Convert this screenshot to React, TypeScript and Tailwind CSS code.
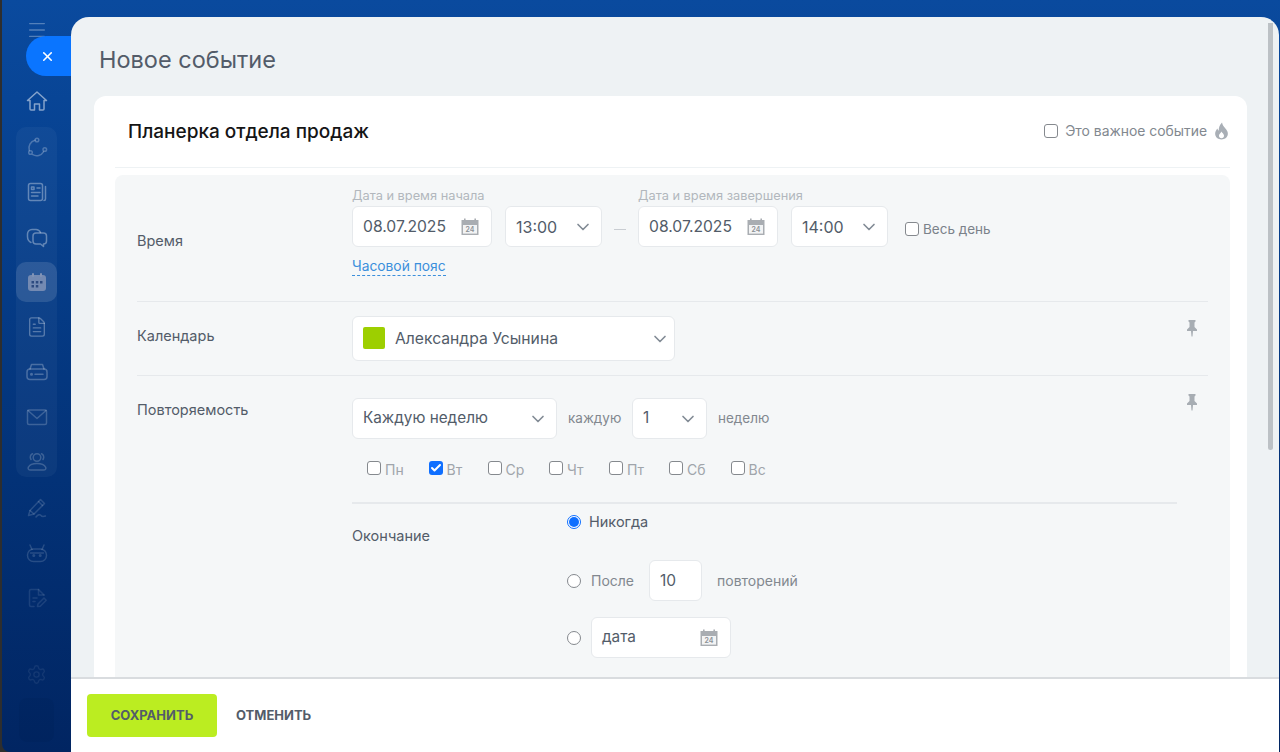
import { Check, ChevronDown, FileText, Menu, Settings, X } from 'lucide-react'

const font = { fontFamily: 'Inter, "Noto Sans", sans-serif' }

function CalIcon() {
  return (
    <svg width="20" height="20" viewBox="0 0 20 20" className="shrink-0">
      <rect x="1.5" y="3" width="17" height="15" fill="#a9adb2" />
      <rect x="4" y="1.5" width="1.6" height="3" fill="#a9adb2" />
      <rect x="14.4" y="1.5" width="1.6" height="3" fill="#a9adb2" />
      <rect x="3" y="8" width="14" height="8.6" fill="#f2f3f4" />
      <text x="10" y="15.2" textAnchor="middle" fontSize="7" fontWeight="600" fill="#8b9095" fontFamily="Inter, sans-serif">24</text>
    </svg>
  )
}

function Flame() {
  return (
    <svg width="15" height="18" viewBox="0 0 14 17">
      <path d="M7.5 0.5c.4 2.6 1.6 3.8 3.2 5.6 1.4 1.6 2.3 3 2.3 5 0 3.2-2.7 5.4-6 5.4s-6-2.2-6-5.4c0-2 .9-3.6 2.1-5 .2 1 .6 1.7 1.3 2.2C4.200 5.500 5.400 2.500 7.500.5z" fill="#a9afb6" />
      <path d="M7 9c.3 1.2 2.4 2.1 2.4 4 0 1.400-1 2.300-2.400 2.300S4.600 14.400 4.600 13C4.600 11.300 6.500 10.400 7 9z" fill="#fff" />
    </svg>
  )
}

function Pin() {
  return (
    <svg width="12" height="18" viewBox="0 0 12 18">
      <path d="M2.500 1h7v1.500L8.500 3.500V8l2.500 2.500V12H7l-.5 5.500h-1L5 12H1v-1.500L3.500 8V3.500l-1-1z" fill="#a7adb3" />
    </svg>
  )
}

type IconProps = { className: string }

function Ico({ className, children }: IconProps & { children: React.ReactNode }) {
  return (
    <svg width="22" height="22" viewBox="0 0 22 22" fill="none" stroke="currentColor" strokeWidth="1.5" strokeLinecap="round" strokeLinejoin="round" className={className}>
      {children}
    </svg>
  )
}

const HomeIco = ({ className }: IconProps) => (
  <Ico className={className}>
    <path d="M1.500 10.500 11 2l9.500 8.500h-2.500V19a1 1 0 0 1-1 1h-3.500v-6h-5v6H5a1 1 0 0 1-1-1v-8.500z" />
  </Ico>
)
const OrbitIco = ({ className }: IconProps) => (
  <Ico className={className}>
    <circle cx="11" cy="4" r="1.800" />
    <circle cx="4.500" cy="16.500" r="1.800" />
    <circle cx="18.800" cy="13.500" r="1.800" />
    <path d="M9 4.300A8 8 0 0 0 3.300 14.500" />
    <path d="M6.800 18.700A8 8 0 0 0 17.500 15.800" />
  </Ico>
)
const NewsIco = ({ className }: IconProps) => (
  <Ico className={className}>
    <rect x="2.500" y="2.500" width="14" height="17" rx="2" />
    <path d="M19.500 5.500V18a1.500 1.500 0 0 1-1.500 1.500" />
    <rect x="5.500" y="6" width="2.500" height="2.500" />
    <path d="M11 7h3M5.500 11.500h8.500M5.500 15h6.500" />
  </Ico>
)
const ChatIco = ({ className }: IconProps) => (
  <Ico className={className}>
    <path d="M5 16.500C2.800 15.500 1.500 13.500 1.500 10.500V8a4.500 4.500 0 0 1 4.500-4.500h4a5 5 0 0 1 4.500 3" />
    <path d="M10 7h7.500a3 3 0 0 1 3 3v5a3 3 0 0 1-3 3V20.500L14.500 18H10a3 3 0 0 1-3-3v-5a3 3 0 0 1 3-3z" />
  </Ico>
)
const DriveIco = ({ className }: IconProps) => (
  <Ico className={className}>
    <path d="M4 8 5.500 3.500h11L18 8" />
    <rect x="1" y="8" width="20" height="10.500" rx="3" />
    <circle cx="5.500" cy="13.200" r=".8" />
    <path d="M9 13.200h8" />
  </Ico>
)
const MailIco = ({ className }: IconProps) => (
  <Ico className={className}>
    <rect x="1.500" y="4" width="19" height="14.500" rx="1.500" />
    <path d="m2 4.500 9 8 9-8" />
  </Ico>
)
const UsersIco = ({ className }: IconProps) => (
  <Ico className={className}>
    <circle cx="11" cy="6.500" r="3.800" />
    <path d="M4.500 19h13c2 0 3-1.500 2-3-1-2-3.500-3.500-8.500-3.500S3.500 14 2.500 16c-1 1.500 0 3 2 3z" />
    <path d="M6.500 2.800C4.500 3.500 3.500 6 5 8.500M15.500 2.800c2 .7 3 3.200 1.500 5.700" />
  </Ico>
)
const PenIco = ({ className }: IconProps) => (
  <Ico className={className}>
    <path d="M2.500 18.500 4 13.500 14.500 2.500l4 4L8 17z" />
    <path d="m12.500 4.500 4 4M4 13.500l4 3.500" />
    <path d="M10 20c2-2.500 4-3 5-1.500.8 1.200 2.200 1.200 4.500.5" />
  </Ico>
)
const BotIco = ({ className }: IconProps) => (
  <Ico className={className}>
    <rect x="1.500" y="7" width="19" height="12.500" rx="6" />
    <path d="M6 7.500 4 3M16 7.500 18 3M4.500 11h13" />
    <circle cx="7.800" cy="13.500" r=".8" />
    <circle cx="14.200" cy="13.500" r=".8" />
  </Ico>
)
const FileEditIco = ({ className }: IconProps) => (
  <Ico className={className}>
    <path d="M18 8 12.500 2.500H5a1.500 1.500 0 0 0-1.500 1.500v14A1.500 1.500 0 0 0 5 19.500h3" />
    <path d="M12.500 2.500V8H18M7 11h4M7 14.500h2" />
    <path d="m11.500 19.500.5-2.500 6-6 2.200 2.200-6 6z" />
  </Ico>
)
const CalFilled = () => (
  <svg width="20" height="20" viewBox="0 0 20 20">
    <rect x="1" y="3" width="18" height="16" rx="3" fill="#8193b6" fillOpacity="0.85" />
    <rect x="5" y="1" width="2" height="4" rx="1" fill="#8193b6" />
    <rect x="13" y="1" width="2" height="4" rx="1" fill="#8193b6" />
    <rect x="4.500" y="9" width="2.500" height="2.500" fill="#2c4a80" />
    <rect x="8.800" y="9" width="2.500" height="2.500" fill="#2c4a80" />
    <rect x="13" y="9" width="2.500" height="2.500" fill="#2c4a80" />
    <rect x="4.500" y="13" width="2.500" height="2.500" fill="#2c4a80" />
    <rect x="8.800" y="13" width="2.500" height="2.500" fill="#2c4a80" />
  </svg>
)

function Box({ children, className }: { children: React.ReactNode; className: string }) {
  return (
    <div className={`flex items-center rounded-md border border-[#e6e9ec] bg-white text-[#525c69] ${className}`}>
      {children}
    </div>
  )
}

function Select({ value, className }: { value: string; className: string }) {
  return (
    <Box className={`h-[41px] justify-between pl-[10px] pr-[8px] text-[16px] ${className}`}>
      <span>{value}</span>
      <ChevronDown size={20} strokeWidth={2} className="text-[#828b95]" />
    </Box>
  )
}

function DateBox({ value, className = '' }: { value: string; className?: string }) {
  return (
    <Box className={`h-[41px] w-[140px] justify-between pl-[10px] pr-[11px] text-[15.700px] ${className}`}>
      <span>{value}</span>
      <CalIcon />
    </Box>
  )
}

function Checkbox({ on }: { on?: boolean }) {
  return on ? (
    <span className="flex h-[14px] w-[14px] items-center justify-center rounded-[3px] bg-[#0f6fff]">
      <Check size={12} strokeWidth={4} className="text-white" />
    </span>
  ) : (
    <span className="h-[14px] w-[14px] rounded-[3px] border border-[#85898e] bg-white" />
  )
}

function Radio({ on }: { on?: boolean }) {
  return on ? (
    <span className="flex h-[14px] w-[14px] items-center justify-center rounded-full border border-[#0f6fff] bg-white">
      <span className="h-[10px] w-[10px] rounded-full bg-[#0f6fff]" />
    </span>
  ) : (
    <span className="h-[14px] w-[14px] rounded-full border border-[#85898e] bg-white" />
  )
}

const days = [
  { d: 'Пн', w: 'w-[61.500px]' },
  { d: 'Вт', w: 'w-[59px]', on: true },
  { d: 'Ср', w: 'w-[61.500px]' },
  { d: 'Чт', w: 'w-[60px]' },
  { d: 'Пт', w: 'w-[60px]' },
  { d: 'Сб', w: 'w-[61.500px]' },
  { d: 'Вс', w: 'w-[60px]' },
]

const topIcons = [
  { I: OrbitIco, c: 'text-white/25' },
  { I: NewsIco, c: 'text-white/35' },
  { I: ChatIco, c: 'text-white/35' },
]
const midIcons = [
  { I: FileText, c: 'text-white/30' },
  { I: DriveIco, c: 'text-white/25' },
  { I: MailIco, c: 'text-white/20' },
  { I: UsersIco, c: 'text-white/20' },
]
const lowIcons = [
  { I: PenIco, c: 'text-white/15' },
  { I: BotIco, c: 'text-white/15' },
  { I: FileEditIco, c: 'text-white/10' },
]

function Sidebar() {
  return (
    <aside className="relative flex h-full w-[69px] shrink-0 flex-col items-center">
      <Menu size={22} strokeWidth={1.5} className="mt-[19px] text-white/30" />
      <HomeIco className="mt-[49px] text-white/50" />
      <div className="mt-[15px] flex h-[350px] w-[41px] shrink-0 flex-col items-center rounded-[10px] bg-white/[0.04]">
        {topIcons.map(({ I, c }, i) => (
          <div key={i} className="flex h-[45px] w-full shrink-0 items-center justify-center pb-[6px]">
            <I className={c} />
          </div>
        ))}
        <div className="flex h-[40px] w-full shrink-0 items-center justify-center rounded-[10px] bg-white/[0.12]">
          <CalFilled />
        </div>
        <div className="h-[2px] shrink-0" />
        {midIcons.map(({ I, c }, i) => (
          <div key={i} className="flex h-[45px] w-full shrink-0 items-center justify-center">
            <I size={22} strokeWidth={1.5} className={c} />
          </div>
        ))}
      </div>
      <div className="h-[8px] shrink-0" />
      {lowIcons.map(({ I, c }, i) => (
        <div key={i} className="flex h-[45px] w-full shrink-0 items-center justify-center">
          <I className={c} />
        </div>
      ))}
      <Settings size={21} strokeWidth={1.5} className="mt-[44px] shrink-0 text-white/[0.07]" />
      <div className="mt-[13px] h-[44px] w-[35px] shrink-0 rounded-[8px] bg-black/[0.04]" />
      <div className="absolute left-[24px] top-[36px] z-10 flex h-[40px] w-[45px] items-center rounded-l-[20px] bg-[#0a75ff] pl-[14px]">
        <X size={15} strokeWidth={2.5} className="text-white" />
      </div>
    </aside>
  )
}

export default function App() {
  return (
    <div style={font} className="flex h-[752px] w-[1280px] overflow-hidden bg-[#2e2e2e] pl-[2px]">
      <div className="flex min-w-0 flex-1 rounded-bl-[8px] bg-gradient-to-b from-[#0a4a9e] to-[#012562]">
        <Sidebar />
        <div className="flex min-w-0 flex-1 flex-col pt-[17px]">
          <div className="relative mr-[1px] flex min-h-0 flex-1 flex-col overflow-hidden rounded-t-[18px] bg-[#eef2f4] pl-[23px] pr-[32px]">
            <div className="absolute right-[6px] top-[6px] h-[427px] w-[5px] rounded-b-full bg-[#bcc1c5]" />
            <h1 className="flex h-[79px] shrink-0 items-center pl-[5px] pt-[7px] text-[23.500px] font-normal text-[#535c69]">Новое событие</h1>
            <div className="flex-1 rounded-t-[12px] bg-white pl-[21px] pr-[17px]">
              <div className="flex h-[72px] items-center justify-between border-b border-[#eef2f4] pl-[13px] pr-[1px]">
                <div className="pt-[1px] text-[19px] font-medium text-[#151515]">Планерка отдела продаж</div>
                <div className="flex items-center text-[13.900px] text-[#82888f]">
                  <Checkbox />
                  <span className="ml-[7px]">Это важное событие</span>
                  <span className="ml-[7px] flex"><Flame /></span>
                </div>
              </div>
              <div className="mt-[7px] h-[600px] rounded-t-[8px] bg-[#f5f7f8] px-[22px]">
                <section className="flex h-[127px] border-b border-[#e6e9ec]">
                  <div className="w-[215px] pt-[55px] text-[14.500px] text-[#535c69]">Время</div>
                  <div>
                    <div className="flex pt-[13px]">
                      <div className="w-[153px]">
                        <div className="mb-[2px] h-[16px] whitespace-nowrap text-[12.800px] leading-[16px] text-[#b2b7bd]">Дата и время начала</div>
                        <DateBox value="08.07.2025" />
                      </div>
                      <div className="pt-[18px]"><Select value="13:00" className="w-[97px]" /></div>
                      <div className="flex w-[36px] justify-center pt-[41px]"><span className="h-px w-[12px] bg-[#c9cdd2]" /></div>
                      <div className="w-[153px]">
                        <div className="mb-[2px] h-[16px] whitespace-nowrap text-[12.800px] leading-[16px] text-[#b2b7bd]">Дата и время завершения</div>
                        <DateBox value="08.07.2025" />
                      </div>
                      <div className="pt-[18px]"><Select value="14:00" className="w-[97px]" /></div>
                      <label className="ml-[17px] flex items-center gap-[4px] self-start pt-[31px] text-[13.500px] text-[#7b828a]">
                        <Checkbox />
                        <span>Весь день</span>
                      </label>
                    </div>
                    <a className="mt-[11px] inline-block border-b border-dashed border-[#3b8fdc] text-[13.800px] leading-[17px] text-[#3b8fdc]">Часовой пояс</a>
                  </div>
                </section>
                <section className="flex h-[74px] border-b border-[#e6e9ec]">
                  <div className="w-[215px] pt-[23px] text-[14.500px] text-[#535c69]">Календарь</div>
                  <Box className="mt-[14px] h-[45px] w-[323px] justify-between pl-[10px] pr-[4px] text-[15.700px]">
                    <span className="flex items-center gap-[10px]">
                      <span className="h-[22px] w-[22px] rounded-[2px] bg-[#9dcf00]" />
                      Александра Усынина
                    </span>
                    <ChevronDown size={20} strokeWidth={2} className="text-[#828b95]" />
                  </Box>
                  <div className="ml-auto mr-[10px] pt-[17px]"><Pin /></div>
                </section>
                <section className="flex">
                  <div className="w-[215px] pt-[23px] text-[14.500px] text-[#535c69]">Повторяемость</div>
                  <div className="w-[825px] pt-[22px]">
                    <div className="flex items-center">
                      <Select value="Каждую неделю" className="w-[205px] !text-[15.300px]" />
                      <span className="ml-[11px] w-[64px] text-[13.500px] text-[#82888f]">каждую</span>
                      <Select value="1" className="w-[75px] !text-[15.300px]" />
                      <span className="ml-[11px] text-[13.500px] text-[#82888f]">неделю</span>
                    </div>
                    <div className="mt-[19px] flex h-[22px] items-center pl-[15px]">
                      {days.map((x) => (
                        <label key={x.d} className={`flex items-center gap-[4px] text-[14px] text-[#a0a5ab] ${x.w}`}>
                          <span className="flex -translate-y-[1px]"><Checkbox on={x.on} /></span>
                          <span>{x.d}</span>
                        </label>
                      ))}
                    </div>
                    <div className="mt-[22px] flex border-t-2 border-[#e6e9ec]">
                      <div className="w-[215px] pt-[21px] text-[14.500px] text-[#535c69]">Окончание</div>
                      <div className="flex flex-col">
                        <label className="flex h-[36px] items-center gap-[8px] text-[14.500px] text-[#535c69]">
                          <Radio on />
                          Никогда
                        </label>
                        <div className="mt-[20px] flex items-center text-[14px] text-[#82888f]">
                          <Radio />
                          <span className="ml-[10px]">После</span>
                          <Box className="ml-[15px] h-[41px] w-[53px] pl-[10px] text-[15.500px]">10</Box>
                          <span className="ml-[15px]">повторений</span>
                        </div>
                        <div className="mt-[16px] flex items-center">
                          <Radio />
                          <DateBox value="дата" className="ml-[10px] !text-[15.300px]" />
                        </div>
                      </div>
                    </div>
                  </div>
                  <div className="ml-auto mr-[10px] pt-[17px]"><Pin /></div>
                </section>
              </div>
            </div>
          </div>
          <footer className="z-10 mr-[1px] flex h-[75px] shrink-0 items-center border-t-2 border-[#d9dcdf] bg-white pl-[16px]">
            <button className="h-[43px] w-[130px] rounded-[4px] bg-[#bbed21] text-[13px] font-bold text-[#535c69]">СОХРАНИТЬ</button>
            <button className="ml-[19px] text-[13px] font-bold text-[#535c69]">ОТМЕНИТЬ</button>
          </footer>
        </div>
      </div>
    </div>
  )
}
